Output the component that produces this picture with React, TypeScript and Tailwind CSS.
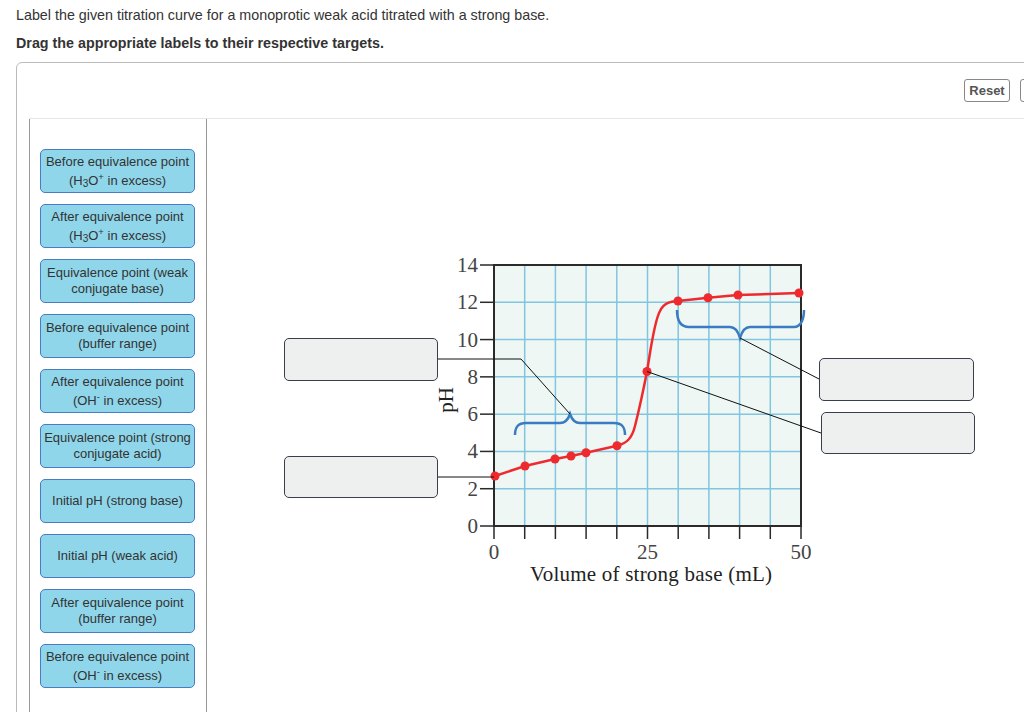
import React from "react";

type Label = { lines: React.ReactNode[] };

const H3O = (
  <>
    (H<sub className="text-[10px]">3</sub>O<sup className="text-[9.5px]">+</sup> in excess)
  </>
);
const OH = (
  <>
    (OH<sup className="text-[9.5px]">-</sup> in excess)
  </>
);

const labels: Label[] = [
  { lines: ["Before equivalence point", H3O] },
  { lines: ["After equivalence point", H3O] },
  { lines: ["Equivalence point (weak", "conjugate base)"] },
  { lines: ["Before equivalence point", "(buffer range)"] },
  { lines: ["After equivalence point", OH] },
  { lines: ["Equivalence point (strong", "conjugate acid)"] },
  { lines: ["Initial pH (strong base)"] },
  { lines: ["Initial pH (weak acid)"] },
  { lines: ["After equivalence point", "(buffer range)"] },
  { lines: ["Before equivalence point", OH] },
];

// plot scale: 0–50 mL across, pH 0–14 up
const X0 = 494;
const X1 = 801;
const Y0 = 526;
const Y14 = 265;
const sx = (v: number) => X0 + (v / 50) * (X1 - X0);
const sy = (p: number) => Y0 - (p / 14) * (Y0 - Y14);

const dots: [number, number][] = [
  [495, 476],
  [525, 466],
  [555, 459],
  [571, 456],
  [586, 452.7],
  [617, 445.7],
  [647, 371.5],
  [678, 301],
  [708, 297.7],
  [738, 295],
  [799, 293],
];

const curve =
  "M495,476 L525,466 L555,459 L571,456 L586,452.7 L617,445.7 " +
  "C627,443.5 632,438 635,426 C639,410 643,392 647,371.5 " +
  "C651,348 654,322 660,311 C664,303 670,301.5 678,301 " +
  "L708,297.7 L738,295 L799,293";

const serif = "'Liberation Serif', serif";

const TitrationChart = () => (
  <svg
    className="absolute left-0 top-0"
    width={817}
    height={593}
    viewBox="207 119 817 593"
  >
    <rect x={X0} y={Y14} width={X1 - X0} height={Y0 - Y14} fill="#eef7f3" />
    {Array.from({ length: 9 }, (_, i) => (
      <line
        key={"v" + i}
        x1={sx((i + 1) * 5)}
        x2={sx((i + 1) * 5)}
        y1={Y14}
        y2={Y0}
        stroke="#82c5e0"
        strokeWidth={1.5}
      />
    ))}
    {[2, 4, 6, 8, 10, 12].map((p) => (
      <line
        key={"h" + p}
        x1={X0}
        x2={X1}
        y1={sy(p)}
        y2={sy(p)}
        stroke="#82c5e0"
        strokeWidth={1.5}
      />
    ))}
    <rect
      x={X0}
      y={Y14}
      width={X1 - X0}
      height={Y0 - Y14}
      fill="none"
      stroke="#2a2a2a"
      strokeWidth={2}
    />

    {/* y axis ticks */}
    {[0, 2, 4, 6, 8, 10, 12, 14].map((p) => (
      <g key={"yt" + p}>
        <line x1={480} x2={X0} y1={sy(p)} y2={sy(p)} stroke="#2a2a2a" strokeWidth={1.5} />
        <text
          x={478}
          y={sy(p) + 7}
          textAnchor="end"
          fontFamily={serif}
          fontSize={21}
          fill="#444"
        >
          {p}
        </text>
      </g>
    ))}

    {/* x axis ticks */}
    {Array.from({ length: 11 }, (_, i) => (
      <line
        key={"xt" + i}
        x1={sx(i * 5)}
        x2={sx(i * 5)}
        y1={Y0}
        y2={539}
        stroke="#2a2a2a"
        strokeWidth={1.5}
      />
    ))}
    {[0, 25, 50].map((v) => (
      <text
        key={"xl" + v}
        x={sx(v)}
        y={559}
        textAnchor="middle"
        fontFamily={serif}
        fontSize={21}
        fill="#444"
      >
        {v}
      </text>
    ))}
    <text
      x={651}
      y={581}
      textAnchor="middle"
      fontFamily={serif}
      fontSize={21}
      fill="#222"
      textLength={242}
    >
      Volume of strong base (mL)
    </text>
    <text
      x={0}
      y={0}
      transform="translate(453 400) rotate(-90)"
      textAnchor="middle"
      fontFamily={serif}
      fontSize={21}
      fill="#222"
    >
      pH
    </text>

    {/* titration curve */}
    <path d={curve} fill="none" stroke="#ee2a2f" strokeWidth={2.5} />
    {dots.map(([x, y], i) => (
      <circle key={"d" + i} cx={x} cy={y} r={4.5} fill="#ee2a2f" />
    ))}

    {/* buffer and excess braces */}
    <path
      d="M515,435 C515,427 518,423 526,423 L560,423 C565,423 568,420 570,414 C572,420 575,423 580,423 L614,423 C622,423 625,427 625,435"
      fill="none"
      stroke="#3a7cc2"
      strokeWidth={2.5}
    />
    <path
      d="M677,310 C677,320 680,327 689,327 L730,327 C735,327 738,331 740,338 C742,331 745,327 750,327 L794,327 C801,327 804,319 804,310"
      fill="none"
      stroke="#3a7cc2"
      strokeWidth={2.5}
    />

    {/* leader lines to the drop targets */}
    <polyline points="438,359 521,359 570,414" fill="none" stroke="#111" strokeWidth={1} />
    <line x1={438} y1={477} x2={494} y2={477} stroke="#111" strokeWidth={1} />
    <line x1={740} y1={338} x2={819} y2={379} stroke="#111" strokeWidth={1} />
    <line x1={647} y1={371.5} x2={821} y2={433} stroke="#111" strokeWidth={1} />
  </svg>
);

const Target = ({ className }: { className: string }) => (
  <div
    className={
      "absolute rounded-[5px] border border-[#3a3d4e] bg-[#eef0f0] " + className
    }
  />
);

export default function App() {
  return (
    <div className="relative h-[712px] w-[1024px] overflow-hidden bg-white font-['Liberation_Sans',Arial,sans-serif] text-[14.3px] text-[#333]">
      <div className="px-4 pt-[6px]">
        <p className="leading-[18px]">
          Label the given titration curve for a monoprotic weak acid titrated with a strong base.
        </p>
        <p className="mt-[10px] font-bold leading-[18px]">
          Drag the appropriate labels to their respective targets.
        </p>
      </div>

      <div className="ml-4 mt-[10px] h-[700px] w-[1061px] rounded-tl-md border border-[#bbb]">
        <div className="flex h-[55px] items-start justify-end gap-[10px] pr-[10px] pt-4">
          <button className="h-[23px] w-[46px] rounded-[3px] border border-[#888] bg-white text-[13px] font-bold text-[#555]">
            Reset
          </button>
          <button
            aria-label="Help"
            className="h-[23px] w-[46px] rounded-[3px] border border-[#888] bg-white"
          />
        </div>

        <div className="ml-3 flex border-t border-[#e6e6e6]">
          <div className="flex h-[600px] w-[178px] flex-col gap-[11px] border-x border-[#999] px-[10px] pt-[30px]">
            {labels.map((l, i) => (
              <div
                key={i}
                className="flex h-[44px] w-[155px] shrink-0 flex-col items-center justify-center rounded-[5px] border border-[#4a7cc4] bg-[#8fd6ea] text-[13px] leading-4 text-[#333]"
              >
                {l.lines.map((line, j) => (
                  <span
                    key={j}
                    className={j > 0 && typeof line !== "string" ? "mt-[3px] whitespace-nowrap" : "whitespace-nowrap"}
                  >
                    {line}
                  </span>
                ))}
              </div>
            ))}
          </div>

          <div className="relative h-[593px] flex-1">
            <TitrationChart />
            <Target className="left-[77px] top-[219px] h-[43px] w-[154px]" />
            <Target className="left-[77px] top-[337px] h-[42px] w-[154px]" />
            <Target className="left-[612px] top-[239px] h-[43px] w-[155px]" />
            <Target className="left-[614px] top-[293px] h-[42px] w-[154px]" />
          </div>
        </div>
      </div>
    </div>
  );
}
